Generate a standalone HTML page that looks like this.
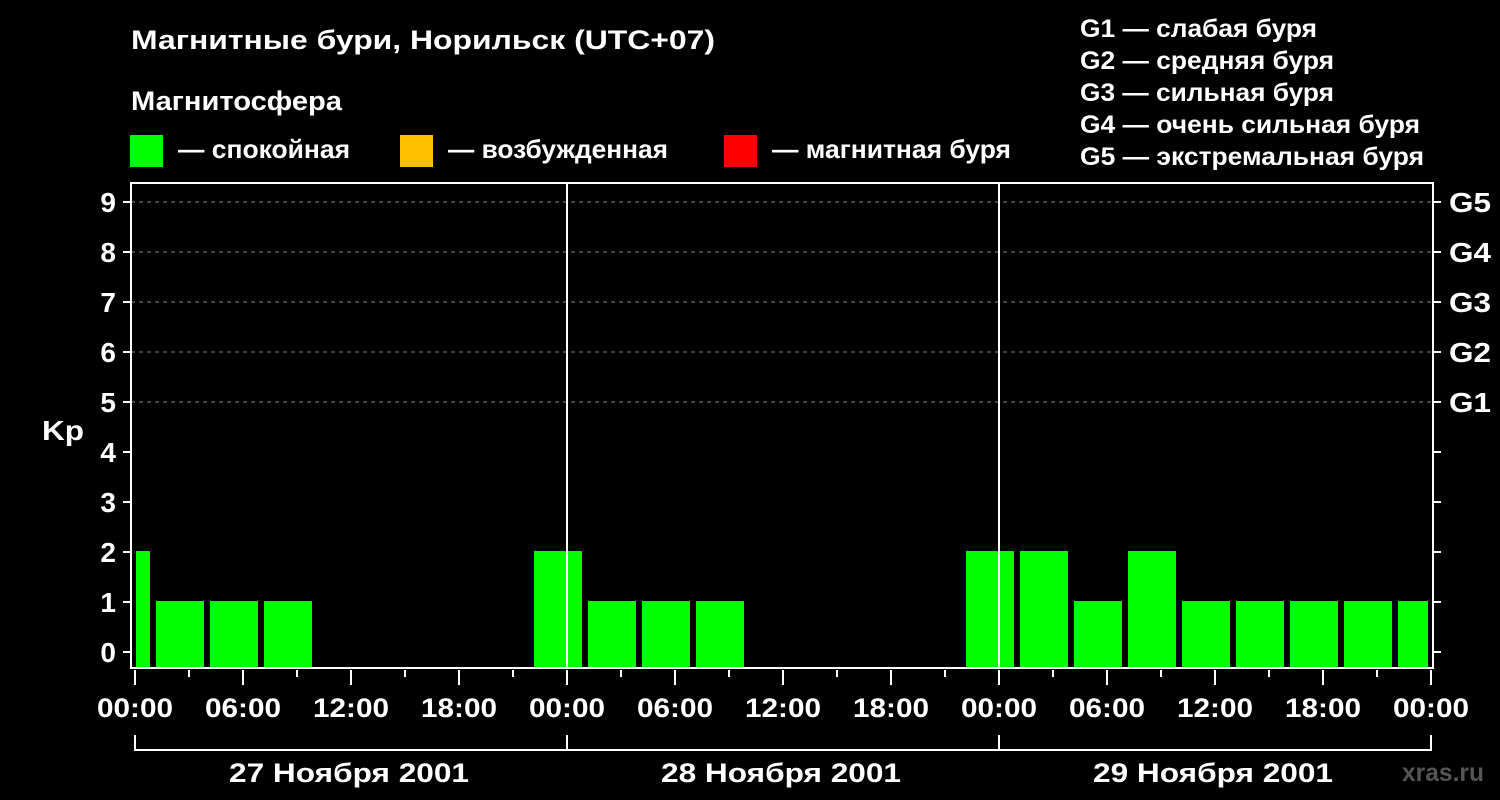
<!DOCTYPE html>
<html><head><meta charset="utf-8"><style>
html,body{margin:0;padding:0;background:#000;}
svg{display:block;}
text{font-family:"Liberation Sans",sans-serif;font-weight:bold;fill:#fff;}
</style></head><body>
<svg width="1500" height="800" viewBox="0 0 1500 800" xmlns="http://www.w3.org/2000/svg">
<rect width="1500" height="800" fill="#000"/>
<text x="131" y="49" font-size="27" textLength="584" lengthAdjust="spacingAndGlyphs">Магнитные бури, Норильск (UTC+07)</text>
<text x="131" y="110" font-size="27" textLength="211" lengthAdjust="spacingAndGlyphs">Магнитосфера</text>
<rect x="130" y="135" width="33" height="32" fill="#00ff00"/>
<text x="178" y="158" font-size="26" textLength="172" lengthAdjust="spacingAndGlyphs">— спокойная</text>
<rect x="400" y="135" width="33" height="32" fill="#ffc000"/>
<text x="448" y="158" font-size="26" textLength="220" lengthAdjust="spacingAndGlyphs">— возбужденная</text>
<rect x="724" y="135" width="33" height="32" fill="#ff0000"/>
<text x="772" y="158" font-size="26" textLength="239" lengthAdjust="spacingAndGlyphs">— магнитная буря</text>
<g font-size="25">
<text x="1080" y="37" textLength="237" lengthAdjust="spacingAndGlyphs">G1 — слабая буря</text>
<text x="1080" y="69" textLength="254" lengthAdjust="spacingAndGlyphs">G2 — средняя буря</text>
<text x="1080" y="101" textLength="254" lengthAdjust="spacingAndGlyphs">G3 — сильная буря</text>
<text x="1080" y="133" textLength="340" lengthAdjust="spacingAndGlyphs">G4 — очень сильная буря</text>
<text x="1080" y="165" textLength="344" lengthAdjust="spacingAndGlyphs">G5 — экстремальная буря</text>
</g>
<g stroke="#888" stroke-width="1" stroke-dasharray="4,4">
<line x1="131" y1="202" x2="1433" y2="202"/>
<line x1="131" y1="252" x2="1433" y2="252"/>
<line x1="131" y1="302" x2="1433" y2="302"/>
<line x1="131" y1="352" x2="1433" y2="352"/>
<line x1="131" y1="402" x2="1433" y2="402"/>
</g>
<g fill="#00ff00">
<rect x="136" y="551" width="14" height="117"/>
<rect x="156" y="601" width="48" height="67"/>
<rect x="210" y="601" width="48" height="67"/>
<rect x="264" y="601" width="48" height="67"/>
<rect x="534" y="551" width="48" height="117"/>
<rect x="588" y="601" width="48" height="67"/>
<rect x="642" y="601" width="48" height="67"/>
<rect x="696" y="601" width="48" height="67"/>
<rect x="966" y="551" width="48" height="117"/>
<rect x="1020" y="551" width="48" height="117"/>
<rect x="1074" y="601" width="48" height="67"/>
<rect x="1128" y="551" width="48" height="117"/>
<rect x="1182" y="601" width="48" height="67"/>
<rect x="1236" y="601" width="48" height="67"/>
<rect x="1290" y="601" width="48" height="67"/>
<rect x="1344" y="601" width="48" height="67"/>
<rect x="1398" y="601" width="30" height="67"/>
</g>
<g stroke="#fff" stroke-width="2" fill="none">
<rect x="131" y="183" width="1302" height="485"/>
<line x1="567" y1="183" x2="567" y2="668"/>
<line x1="999" y1="183" x2="999" y2="668"/>
<path d="M123 202h8M123 252h8M123 302h8M123 352h8M123 402h8M123 452h8M123 502h8M123 552h8M123 602h8M123 652h8"/>
<path d="M1433 202h8M1433 252h8M1433 302h8M1433 352h8M1433 402h8M1433 452h8M1433 502h8M1433 552h8M1433 602h8M1433 652h8"/>
<path d="M135 670v15M243 670v15M351 670v15M459 670v15M567 670v15M675 670v15M783 670v15M891 670v15M999 670v15M1107 670v15M1215 670v15M1323 670v15M1431 670v15"/>
<path d="M189 670v7M297 670v7M405 670v7M513 670v7M621 670v7M729 670v7M837 670v7M945 670v7M1053 670v7M1161 670v7M1269 670v7M1377 670v7"/>
<path d="M135 735v15H1431v-15M567 735v15M999 735v15"/>
</g>
<g font-size="28" text-anchor="end">
<text x="116" y="212">9</text><text x="116" y="262">8</text><text x="116" y="312">7</text>
<text x="116" y="362">6</text><text x="116" y="412">5</text><text x="116" y="462">4</text>
<text x="116" y="512">3</text><text x="116" y="562">2</text><text x="116" y="612">1</text>
<text x="116" y="662">0</text>
</g>
<text x="42" y="440" font-size="28" textLength="42" lengthAdjust="spacingAndGlyphs">Kp</text>
<g font-size="28">
<text x="1449" y="212" textLength="42" lengthAdjust="spacingAndGlyphs">G5</text><text x="1449" y="262" textLength="42" lengthAdjust="spacingAndGlyphs">G4</text><text x="1449" y="312" textLength="42" lengthAdjust="spacingAndGlyphs">G3</text>
<text x="1449" y="362" textLength="42" lengthAdjust="spacingAndGlyphs">G2</text><text x="1449" y="412" textLength="42" lengthAdjust="spacingAndGlyphs">G1</text>
</g>
<g font-size="27" text-anchor="middle">
<text x="135" y="717" textLength="76" lengthAdjust="spacingAndGlyphs">00:00</text><text x="243" y="717" textLength="76" lengthAdjust="spacingAndGlyphs">06:00</text><text x="351" y="717" textLength="76" lengthAdjust="spacingAndGlyphs">12:00</text><text x="459" y="717" textLength="76" lengthAdjust="spacingAndGlyphs">18:00</text>
<text x="567" y="717" textLength="76" lengthAdjust="spacingAndGlyphs">00:00</text><text x="675" y="717" textLength="76" lengthAdjust="spacingAndGlyphs">06:00</text><text x="783" y="717" textLength="76" lengthAdjust="spacingAndGlyphs">12:00</text><text x="891" y="717" textLength="76" lengthAdjust="spacingAndGlyphs">18:00</text>
<text x="999" y="717" textLength="76" lengthAdjust="spacingAndGlyphs">00:00</text><text x="1107" y="717" textLength="76" lengthAdjust="spacingAndGlyphs">06:00</text><text x="1215" y="717" textLength="76" lengthAdjust="spacingAndGlyphs">12:00</text><text x="1323" y="717" textLength="76" lengthAdjust="spacingAndGlyphs">18:00</text>
<text x="1431" y="717" textLength="76" lengthAdjust="spacingAndGlyphs">00:00</text>
<text x="349" y="782" textLength="240" lengthAdjust="spacingAndGlyphs">27 Ноября 2001</text>
<text x="781" y="782" textLength="240" lengthAdjust="spacingAndGlyphs">28 Ноября 2001</text>
<text x="1213" y="782" textLength="240" lengthAdjust="spacingAndGlyphs">29 Ноября 2001</text>
</g>
<text x="1402" y="781" font-size="25" textLength="82" lengthAdjust="spacingAndGlyphs" style="fill:#555">xras.ru</text>
</svg>
</body></html>
